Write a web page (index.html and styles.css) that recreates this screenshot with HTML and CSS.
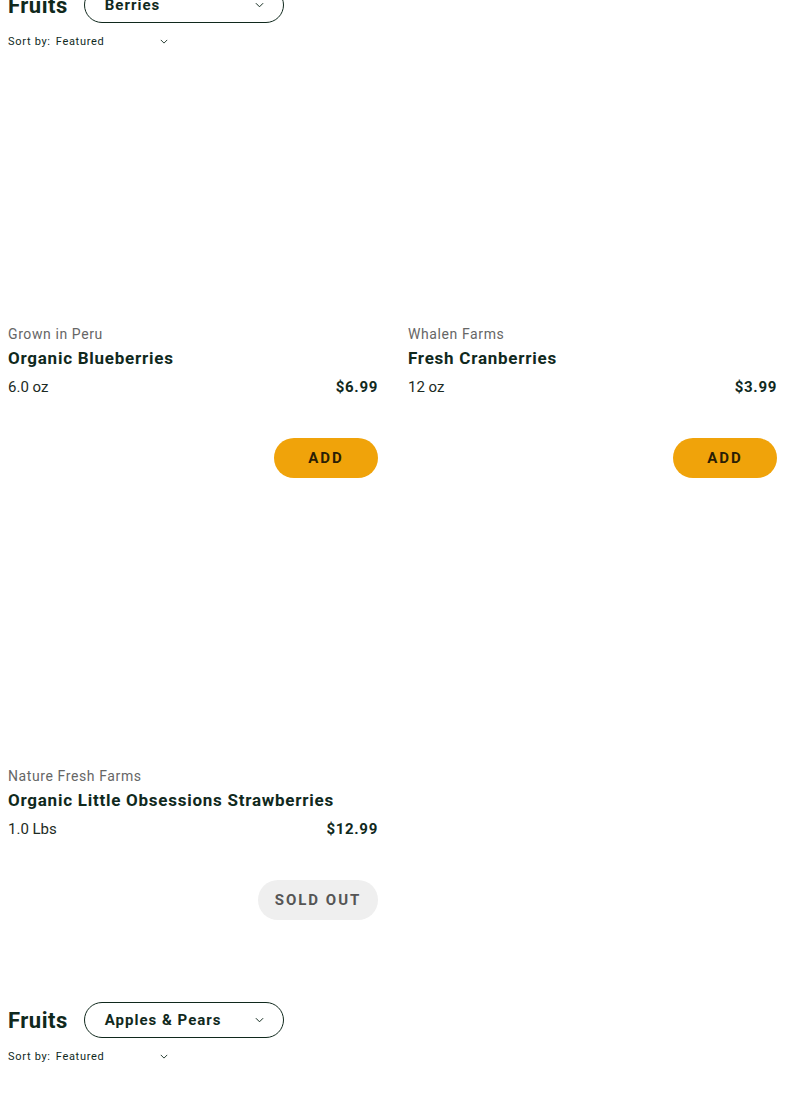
FILE: index.html
```html
<!DOCTYPE html>
<html>
<head>
<meta charset="utf-8">
<link rel="stylesheet" href="styles.css">
</head>
<body>
<main class="page">
  <section class="category first">
    <div class="cat-head">
      <h2 class="cat-title">Fruits</h2>
      <div class="select">
        <span>Berries</span>
        <svg class="chev" viewBox="0 0 10 6" width="9" height="6"><path d="M1 1l4 4 4-4" fill="none" stroke="#10291d" stroke-width="1.1"/></svg>
      </div>
    </div>
    <div class="sort">
      <span class="sort-label">Sort by:</span>
      <span class="sort-value">Featured</span>
      <svg class="chev" viewBox="0 0 10 6" width="8" height="5"><path d="M1 1l4 4 4-4" fill="none" stroke="#10291d" stroke-width="1.1"/></svg>
    </div>
    <div class="grid">
      <article class="card">
        <div class="img"></div>
        <div class="vendor">Grown in Peru</div>
        <div class="name">Organic Blueberries</div>
        <div class="meta"><span class="weight">6.0 oz</span><span class="price">$6.99</span></div>
        <div class="actions"><button class="btn add">ADD</button></div>
      </article>
      <article class="card">
        <div class="img"></div>
        <div class="vendor">Whalen Farms</div>
        <div class="name">Fresh Cranberries</div>
        <div class="meta"><span class="weight">12 oz</span><span class="price">$3.99</span></div>
        <div class="actions"><button class="btn add">ADD</button></div>
      </article>
      <article class="card">
        <div class="img"></div>
        <div class="vendor">Nature Fresh Farms</div>
        <div class="name">Organic Little Obsessions Strawberries</div>
        <div class="meta"><span class="weight">1.0 Lbs</span><span class="price">$12.99</span></div>
        <div class="actions"><button class="btn sold">SOLD OUT</button></div>
      </article>
    </div>
  </section>
  <section class="category">
    <div class="cat-head">
      <h2 class="cat-title">Fruits</h2>
      <div class="select">
        <span>Apples &amp; Pears</span>
        <svg class="chev" viewBox="0 0 10 6" width="9" height="6"><path d="M1 1l4 4 4-4" fill="none" stroke="#10291d" stroke-width="1.1"/></svg>
      </div>
    </div>
    <div class="sort">
      <span class="sort-label">Sort by:</span>
      <span class="sort-value">Featured</span>
      <svg class="chev" viewBox="0 0 10 6" width="8" height="5"><path d="M1 1l4 4 4-4" fill="none" stroke="#10291d" stroke-width="1.1"/></svg>
    </div>
  </section>
</main>
</body>
</html>
```

FILE: styles.css
```css
html, body {
  margin: 0;
  padding: 0;
  background: #ffffff;
  overflow: hidden;
}
body {
  font-family: Roboto, "Liberation Sans", sans-serif;
  color: #10291d;
}
.page {
  padding: 0 8px;
}
.category.first {
  margin-top: -13px;
}
.category {
  margin-bottom: 82px;
}
.cat-head {
  display: flex;
  align-items: center;
  gap: 16px;
  height: 36px;
}
.cat-title {
  margin: 0;
  font-size: 22px;
  font-weight: 700;
  letter-spacing: 0.5px;
  color: #10291d;
}
.select {
  box-sizing: border-box;
  width: 200px;
  height: 36px;
  border: 1px solid #10291d;
  border-radius: 18px;
  display: flex;
  align-items: center;
  justify-content: space-between;
  padding: 0 19px 0 20px;
  font-size: 15px;
  font-weight: 700;
  letter-spacing: 1px;
}
.sort {
  display: flex;
  align-items: center;
  height: 16px;
  margin-top: 10px;
  font-size: 11px;
  letter-spacing: 0.7px;
  color: #10291d;
}
.sort-label {
  margin-right: 5px;
}
.sort-value {
  width: 104px;
}
.grid {
  margin-top: 11px;
  display: grid;
  grid-template-columns: 370px 369px;
  column-gap: 30px;
  row-gap: 24px;
}
.card {
  display: flex;
  flex-direction: column;
}
.img {
  height: 264px;
}
.vendor {
  font-size: 14px;
  line-height: 20px;
  color: #666666;
  letter-spacing: 0.6px;
}
.name {
  margin-top: 2px;
  font-size: 17px;
  line-height: 24px;
  font-weight: 700;
  letter-spacing: 0.75px;
  color: #10291d;
}
.meta {
  margin-top: 7px;
  display: flex;
  justify-content: space-between;
  font-size: 15px;
  line-height: 20px;
}
.weight {
  color: #1d2b24;
}
.price {
  font-weight: 700;
  letter-spacing: 0.7px;
}
.actions {
  margin-top: 41px;
  display: flex;
  justify-content: flex-end;
}
.btn {
  height: 40px;
  border: none;
  border-radius: 20px;
  font-family: Roboto, "Liberation Sans", sans-serif;
  font-size: 15px;
  font-weight: 700;
  letter-spacing: 2px;
  padding: 0;
}
.add {
  width: 104px;
  background: #f0a30a;
  color: #2a1e05;
}
.sold {
  width: 120px;
  background: #efefef;
  color: #555555;
}
```
